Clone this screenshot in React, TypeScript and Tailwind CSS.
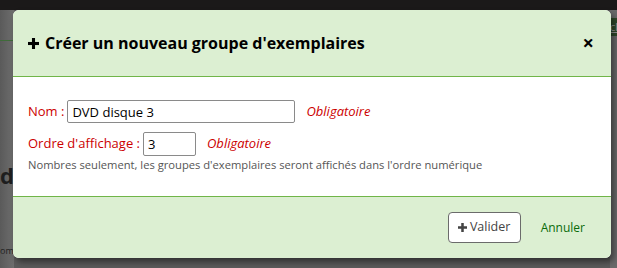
import React from 'react';

const FONT = "font-['Open_Sans','Noto_Sans',sans-serif]";

function PlusIcon({ className }: { className?: string }) {
    return (
        <svg viewBox="0 0 10 10" className={className} fill="currentColor">
            <rect x="3.6" y="0" width="2.8" height="10" />
            <rect x="0" y="3.6" width="10" height="2.8" />
        </svg>
    );
}

function Field({ label, children }: { label: string; children: React.ReactNode }) {
    return (
        <div className="flex items-center">
            <label className="text-[13px] text-[#cc0000] mr-[3px]">{label}</label>
            {children}
            <span className="ml-[11px] text-[13px] italic text-[#cc0000]">Obligatoire</span>
        </div>
    );
}

export default function App() {
    return (
        <div className={`relative w-[617px] h-[268px] overflow-hidden bg-[#5b5b5b] ${FONT}`}>
            {/* page behind the overlay */}
            <div className="h-[10px] bg-[#1b1919]" />
            <div className="flex justify-between">
                <div className="w-[14px] h-[258px] bg-gradient-to-r from-[#5a5a5a] to-[#6e6e6e] relative">
                    <div className="absolute top-[30px] left-0 w-[14px] h-px bg-[#3f6b3a]" />
                    <span className="absolute top-[154px] left-0 text-[22px] font-bold text-[#1e1e1e] leading-none">d</span>
                    <span className="absolute top-[236px] left-0 text-[9px] text-[#222] leading-none">om</span>
                </div>
                <div className="w-[7px] h-[258px] bg-[#6a6a6a]">
                    <div className="mt-[8px] h-[18px] bg-[#2f4a2a] text-[11px] text-[#999] underline leading-[18px]">cl</div>
                </div>
            </div>

            {/* modal */}
            <div className="absolute left-[13px] top-[10px] w-[598px] h-[248px] rounded-[6px] bg-white overflow-hidden shadow-[3px_4px_6px_rgba(0,0,0,0.45)] flex flex-col">
                <div className="h-[67px] shrink-0 bg-[#dcefd2] border-b border-[#70b548] flex items-center justify-between pl-[15px] pr-[17px]">
                    <h3 className="flex items-center text-[16px] font-bold text-black">
                        <PlusIcon className="w-[11px] h-[11px] mr-[6px]" />
                        Créer un nouveau groupe d'exemplaires
                    </h3>
                    <button className="text-[20px] font-bold leading-none text-black">×</button>
                </div>

                <div className="flex-1 px-[15px] pt-[23px] flex flex-col gap-[9px]">
                    <Field label="Nom :">
                        <input
                            readOnly
                            value="DVD disque 3"
                            className="w-[228px] h-[23px] border border-[#8a8a8a] rounded-[2px] px-[4px] text-[13px] text-black outline-none"
                        />
                    </Field>
                    <div>
                        <Field label="Ordre d'affichage :">
                            <input
                                readOnly
                                value="3"
                                className="w-[53px] h-[24px] border border-[#8a8a8a] rounded-[2px] px-[4px] text-[13px] text-black outline-none"
                            />
                        </Field>
                        <p className="text-[11.2px] text-[#555] mt-[1px]">
                            Nombres seulement, les groupes d'exemplaires seront affichés dans l'ordre numérique
                        </p>
                    </div>
                </div>

                <div className="h-[62px] shrink-0 bg-[#dcefd2] border-t border-[#70b548] flex items-center justify-end pr-[26px] gap-[20px]">
                    <button className="h-[31px] w-[73px] flex items-center justify-center gap-[3px] bg-white border border-[#6b6b6b] rounded-[4px] text-[12.5px] text-[#444]">
                        <PlusIcon className="w-[9px] h-[9px]" />
                        Valider
                    </button>
                    <a className="text-[12px] text-[#0a6b0a]">Annuler</a>
                </div>
            </div>
        </div>
    );
}
